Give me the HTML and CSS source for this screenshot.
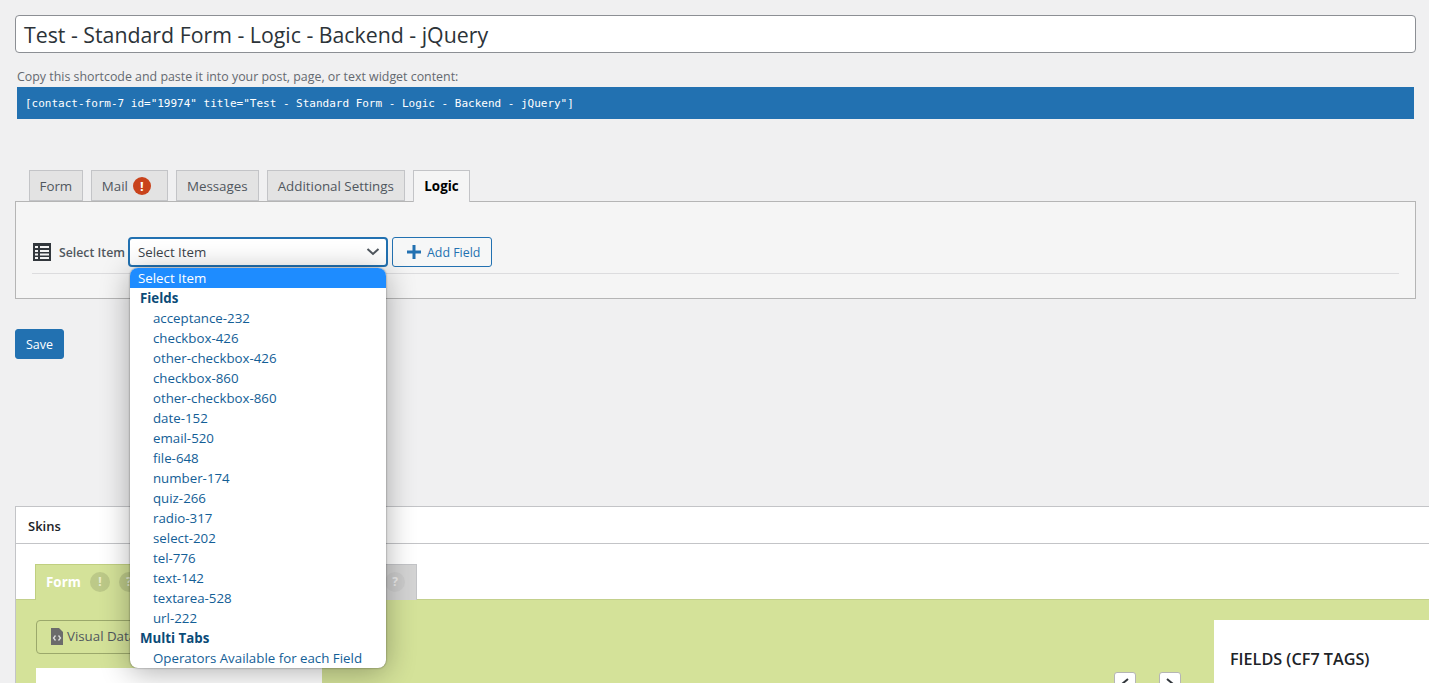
FILE: index.html
```html
<!DOCTYPE html>
<html lang="en">
<head>
<meta charset="utf-8">
<title>Edit Contact Form</title>
<link rel="stylesheet" href="styles.css">
</head>
<body>
<div class="page">
  <div class="title-box">Test - Standard Form - Logic - Backend - jQuery</div>
  <p class="hint">Copy this shortcode and paste it into your post, page, or text widget content:</p>
  <div class="code-bar">[contact-form-7 id="19974" title="Test - Standard Form - Logic - Backend - jQuery"]</div>

  <div class="tabs">
    <span class="tab tab-form">Form</span>
    <span class="tab tab-mail">Mail <span class="alert">!</span></span>
    <span class="tab">Messages</span>
    <span class="tab">Additional Settings</span>
    <span class="tab tab-active">Logic</span>
  </div>
  <div class="panel">
    <div class="logic-row">
      <svg class="list-icon" width="18" height="18" viewBox="0 0 18 18"><path fill="#32373c" d="M0 0h18v18H0z"/><path fill="#f5f5f5" d="M2 3h3v2H2zM7 3h9v2H7zM2 7h3v2H2zM7 7h9v2H7zM2 10.500h3v2H2zM7 10.500h9v2H7zM2 14h3v2H2zM7 14h9v2H7z"/></svg>
      <span class="logic-label">Select Item</span>
      <div class="select-wrap">
        <div class="select-box">
          <span>Select Item</span>
          <svg width="14" height="8" viewBox="0 0 14 8"><path d="M1.500 1l5.500 5 5.500-5" fill="none" stroke="#50575e" stroke-width="2"/></svg>
        </div>
        <div class="dropdown">
          <div class="opt opt-selected">Select Item</div>
          <div class="opt-group">Fields</div>
          <div class="opt">acceptance-232</div>
          <div class="opt">checkbox-426</div>
          <div class="opt">other-checkbox-426</div>
          <div class="opt">checkbox-860</div>
          <div class="opt">other-checkbox-860</div>
          <div class="opt">date-152</div>
          <div class="opt">email-520</div>
          <div class="opt">file-648</div>
          <div class="opt">number-174</div>
          <div class="opt">quiz-266</div>
          <div class="opt">radio-317</div>
          <div class="opt">select-202</div>
          <div class="opt">tel-776</div>
          <div class="opt">text-142</div>
          <div class="opt">textarea-528</div>
          <div class="opt">url-222</div>
          <div class="opt-group">Multi Tabs</div>
          <div class="opt">Operators Available for each Field</div>
        </div>
      </div>
      <button class="add-btn"><svg class="plus" width="14" height="14" viewBox="0 0 14 14"><path fill="#2271b1" d="M5.500 0h3v5.500H14v3H8.500V14h-3V8.500H0v-3h5.500z"/></svg>Add Field</button>
    </div>
  </div>
  <button class="save">Save</button>

  <div class="skins">
    <div class="skins-head">Skins</div>
    <div class="skins-body">
      <div class="skin-tabs">
        <div class="skin-tab skin-tab-on">Form <span class="dot">!</span><span class="dot">?</span></div>
        <div class="skin-tab skin-tab-off"><span class="dot dot-grey">?</span></div>
      </div>
      <div class="green">
        <div class="green-left">
          <div class="visual-btn">
            <svg width="12" height="17" viewBox="0 0 12 17"><path fill="#6b6b6b" d="M0 0h8l4 4v13H0z"/><path d="M4.500 7.500L2.500 10l2 2.500M7.500 7.500l2 2.500-2 2.500" fill="none" stroke="#ddd" stroke-width="1.300"/></svg>
            Visual Data
          </div>
          <div class="white-left"></div>
        </div>
        <div class="pager">
          <span class="page-btn"><svg width="10" height="12" viewBox="0 0 10 12"><path d="M8 1L2 6l6 5" fill="none" stroke="#32373c" stroke-width="2"/></svg></span>
          <span class="page-btn"><svg width="10" height="12" viewBox="0 0 10 12"><path d="M2 1l6 5-6 5" fill="none" stroke="#32373c" stroke-width="2"/></svg></span>
        </div>
        <div class="fields-panel">FIELDS (CF7 TAGS)</div>
      </div>
    </div>
  </div>
</div>
</body>
</html>
```

FILE: styles.css
```css
* { box-sizing: border-box; }
html, body { margin: 0; height: 683px; overflow: hidden; }
body { background: #f0f0f1; color: #3c434a; font-family: "Open Sans", "Noto Sans", sans-serif; font-size: 13.300px; }
.page { padding: 15px 13px 0 15px; width: 1429px; }
.title-box { height: 38px; width: 1401px; background: #fff; border: 1px solid #8c8f94; border-radius: 4px; padding: 0 8px; font-size: 21.300px; line-height: 38px; color: #2c3338; }
.hint { margin: 15px 0 0 2px; height: 19px; line-height: 18px; font-size: 12.400px; color: #646970; }
.code-bar { margin-left: 2px; width: 1397px; height: 32px; background: #2271b1; color: #fff; font-family: "DejaVu Sans Mono", monospace; font-size: 11px; line-height: 33px; padding-left: 8px; letter-spacing: -.01px; }
.tabs { display: flex; gap: 8px; margin-top: 51px; padding-left: 14px; height: 32px; position: relative; z-index: 1; }
.tab { height: 31px; padding: 0 10px; background: #e3e3e3; border: 1px solid #c3c4c7; color: #50575e; font-size: 13.350px; line-height: 30px; display: flex; align-items: center; gap: 5px; }
.tab-form { padding: 0 9.500px; }
.tab-mail { padding-right: 16px; }
.tab-active { height: 32px; padding: 0 10.500px 1px; background: #f5f5f5; border-bottom: 0; font-weight: 700; color: #000; }
.alert { width: 18px; height: 18px; border-radius: 50%; background: #c9431c; color: #fff; font-size: 13px; font-weight: 700; line-height: 18px; text-align: center; }
.panel { width: 1401px; height: 98px; margin-top: -1px; background: #f5f5f5; border: 1px solid #b5b5b5; padding: 35px 16px 0; }
.logic-row { display: flex; align-items: flex-start; height: 37px; border-bottom: 1px solid #dcdcde; }
.list-icon { margin: 6px 0 0 1px; }
.logic-label { margin: 0 3px 0 8px; line-height: 31px; font-size: 12.300px; font-weight: 600; color: #50575e; }
.select-wrap { position: relative; width: 260px; }
.select-box { height: 30px; background: #fff; border: 2px solid #2271b1; border-radius: 4px; display: flex; justify-content: space-between; align-items: center; padding: 0 6px 0 8px; color: #3c434a; font-size: 13.300px; }
.dropdown { position: absolute; left: 2px; top: 31px; width: 256px; height: 400px; background: #fff; border-radius: 8px; box-shadow: 0 4px 30px rgba(0,0,0,.32), 0 0 2px rgba(0,0,0,.5); overflow: hidden; z-index: 5; }
.opt, .opt-group { height: 20px; line-height: 20px; }
.opt { padding-left: 23px; color: #135e96; }
.opt-selected { padding-left: 8px; background: #1e8cff; color: #fff; }
.opt-group { padding-left: 10px; font-weight: 700; color: #0a4b78; }
.add-btn { margin-left: 4px; display: flex; align-items: center; gap: 6px; width: 100px; height: 30px; padding: 0 14px; background: #f6f7f7; border: 1px solid #2271b1; border-radius: 3px; color: #2271b1; font: 12.400px "Open Sans", sans-serif; white-space: nowrap; }
.plus { flex: none; }
.save { display: block; margin-top: 30px; width: 49px; height: 30px; padding: 0; background: #2271b1; color: #fff; border: 1px solid #2271b1; border-radius: 3px; font: 12.500px "Open Sans", sans-serif; }
.skins { margin-top: 147px; width: 1414px; background: #fff; border: 1px solid #c3c4c7; border-right: 0; }
.skins-head { height: 37px; line-height: 38px; padding-left: 12px; font-size: 13px; font-weight: 600; color: #1d2327; border-bottom: 1px solid #c3c4c7; }
.skins-body { padding-top: 20px; }
.skin-tabs { display: flex; gap: 8px; padding-left: 19px; height: 35px; }
.skin-tab { height: 36px; display: flex; align-items: center; gap: 9px; }
.skin-tab-on { width: 134px; padding-left: 10px; padding-bottom: 2px; background: #d4e299; border: 1px solid #c0cf80; border-bottom: 0; color: #fff; font-weight: 700; font-size: 13.400px; position: relative; z-index: 1; }
.skin-tab-off { width: 240px; justify-content: flex-end; padding-right: 11px; padding-bottom: 2px; background: #d4d4d4; border: 1px solid #c3c4c7; border-bottom: 0; }
.dot { width: 20px; height: 20px; border-radius: 50%; background: #bcc988; color: #e9eed0; font-size: 12px; font-weight: 700; line-height: 20px; text-align: center; }
.dot-grey { background: #cccccc; color: #ececec; }
.green { display: flex; height: 90px; background: #d4e299; padding: 20px 0 0 20px; overflow: hidden; border-top: 1px solid #c3d08c; }
.green-left { width: 286px; flex: none; }
.visual-btn { display: flex; align-items: center; gap: 4px; width: 150px; height: 34px; padding: 0 0 2px 14px; background: #d4e299; border: 1px solid #9ba86b; border-radius: 4px; font-size: 13.300px; color: #50575e; }
.white-left { margin-top: 14px; height: 60px; background: #fff; }
.pager { display: flex; gap: 23px; margin: 52px 0 0 792px; width: 116px; height: 30px; flex: none; }
.page-btn { width: 22px; height: 30px; background: #fff; border: 1px solid #b5b5b5; border-radius: 3px; display: flex; justify-content: center; padding-top: 5px; }
.fields-panel { flex: none; width: 215px; margin-left: -16px; height: 80px; background: #fff; padding: 28px 0 0 16px; font-size: 16.200px; font-weight: 600; color: #1d2327; }
```
